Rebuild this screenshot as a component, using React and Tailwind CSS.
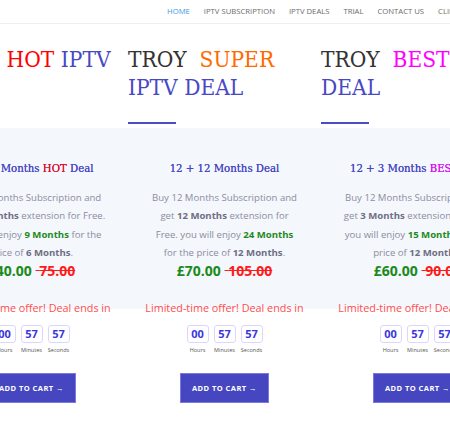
import React from "react";

const sans = { fontFamily: '"Open Sans", "Noto Sans", sans-serif' };
const serif = { fontFamily: '"DejaVu Serif Condensed", "DejaVu Serif", "Liberation Serif", serif' };

const navItems = ["HOME", "IPTV SUBSCRIPTION", "IPTV DEALS", "TRIAL", "CONTACT US", "CLIENT AREA"];

const deals = [
  {
    word: "HOT",
    wordClass: "text-[#ff0000]",
    rest: "IPTV DEAL",
    title: (
      <>
        6 + 3 Months <span className="text-[#ff0000]">HOT</span> Deal
      </>
    ),
    lines: [
      <>Buy 6 Months Subscription and</>,
      <>get <b className="text-[#6e6e85]">3 Months</b> extension for Free.</>,
      <>you will enjoy <b className="text-[#1e8a1e]">9 Months</b> for the</>,
      <>price of <b className="text-[#6e6e85]">6 Months</b>.</>,
    ],
    price: "£40.00",
    old: "75.00",
  },
  {
    word: "SUPER",
    wordClass: "text-[#ff6a00]",
    rest: "IPTV DEAL",
    title: <>12 + 12 Months Deal</>,
    lines: [
      <>Buy 12 Months Subscription and</>,
      <>get <b className="text-[#6e6e85]">12 Months</b> extension for</>,
      <>Free. you will enjoy <b className="text-[#1e8a1e]">24 Months</b></>,
      <>for the price of <b className="text-[#6e6e85]">12 Months</b>.</>,
    ],
    price: "£70.00",
    old: "105.00",
  },
  {
    word: "BEST",
    wordClass: "text-[#ff00ff]",
    rest: "DEAL",
    title: (
      <>
        12 + 3 Months <span className="text-[#ff00ff]">BEST</span> Deal
      </>
    ),
    lines: [
      <>Buy 12 Months Subscription and</>,
      <>get <b className="text-[#6e6e85]">3 Months</b> extension for Free.</>,
      <>you will enjoy <b className="text-[#1e8a1e]">15 Months</b> for the</>,
      <>price of <b className="text-[#6e6e85]">12 Months</b>.</>,
    ],
    price: "£60.00",
    old: "90.00",
  },
];

function Heading({ d }) {
  return (
    <div className="w-[183px] text-[22.5px] leading-[28px] text-[#333333]" style={serif}>
      TROY&nbsp; <span className={d.wordClass}>{d.word}</span>{" "}
      <span className="text-[#4848c4]">{d.rest}</span>
    </div>
  );
}

function Box({ n, label }) {
  return (
    <div className="flex flex-col items-center w-[22px]">
      <div className="w-[22px] h-[18px] rounded-[3px] border border-[#dcd6ff] bg-white flex items-center justify-center text-[11px] font-bold text-[#3a36e0]">
        {n}
      </div>
      <div className="mt-[3px] text-[5.5px] text-[#555] whitespace-nowrap">{label}</div>
    </div>
  );
}

function Column({ d }) {
  return (
    <div className="w-[193px] shrink-0 flex flex-col" style={sans}>
      <div className="pt-[21px] h-[98px]">
        <Heading d={d} />
      </div>
      <div className="h-[2px] w-[48px] bg-[#4b4bc8]" />
      <div className="mt-[4px] h-[181px] bg-[#f4f7fb] flex flex-col items-center pt-[33px]">
        <div className="text-[11.3px] leading-[16px] text-[#4848c4] whitespace-nowrap [text-shadow:0_0_0.4px_#4848c4]" style={serif}>
          {d.title}
        </div>
        <div className="mt-[12px] text-[9.6px] leading-[18.3px] text-[#8c8ca3] text-center whitespace-nowrap">
          {d.lines.map((l, i) => (
            <div key={i}>{l}</div>
          ))}
        </div>
        <div className="text-[14px] leading-[18px] font-bold whitespace-nowrap">
          <span className="text-[#1a8a1a]">{d.price}</span>{" "}
          <span className="text-[#ff1a1a] line-through">&nbsp;{d.old}</span>
        </div>
      </div>
      <div className="-mt-[9px] flex flex-col items-center">
        <div className="text-[10.8px] leading-[16px] text-[#ff4d4d] whitespace-nowrap">
          Limited-time offer! Deal ends in
        </div>
        <div className="mt-[9px] flex gap-[5px]">
          <Box n="00" label="Hours" />
          <Box n="57" label="Minutes" />
          <Box n="57" label="Seconds" />
        </div>
        <button className="mt-[19px] w-[89px] h-[30px] bg-[#4646c0] border border-[#7a7ae0] text-white text-[7.5px] font-bold tracking-[0.06em] whitespace-nowrap">
          ADD TO CART →
        </button>
      </div>
    </div>
  );
}

export default function App() {
  return (
    <div className="w-[450px] h-[422px] overflow-hidden bg-white">
      <nav
        className="h-6 flex items-center gap-[14px] pl-[167px] border-b border-[#eeeeee] whitespace-nowrap text-[7.7px] text-[#6b6b6b]"
        style={sans}
      >
        {navItems.map((n, i) => (
          <span key={n} className={i === 0 ? "text-[#3a9ae0]" : ""}>
            {n}
          </span>
        ))}
      </nav>
      <div className="flex ml-[-65px]">
        {deals.map((d, i) => (
          <Column key={i} d={d} />
        ))}
      </div>
    </div>
  );
}
